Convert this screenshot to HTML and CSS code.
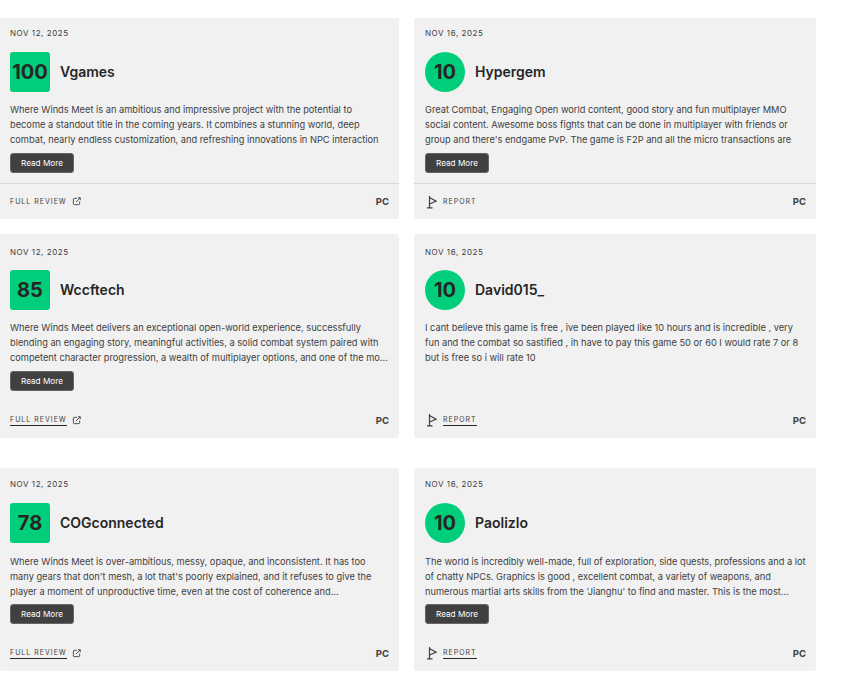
FILE: index.html
```html
<!DOCTYPE html>
<html lang="en">
<head>
    <meta charset="UTF-8">
    <title>Where Winds Meet reviews</title>
    <link rel="stylesheet" href="styles.css">
</head>
<body>
    <div class="row row-1">
        <div class="card card-left">
            <div class="date">NOV 12, 2025</div>
            <div class="head">
                <div class="score square">100</div>
                <div class="name">Vgames</div>
            </div>
            <p class="quote">Where Winds Meet is an ambitious and impressive project with the potential to become a standout title in the coming years. It combines a stunning world, deep combat, nearly endless customization, and refreshing innovations in NPC interaction</p>
            <a class="more">Read More</a>
            <div class="foot ruled">
                <span class="link"><span class="plain">FULL REVIEW</span>
                    <svg class="ext" viewBox="0 0 10 10"><path d="M5.5 1.5H2.5a1 1 0 0 0-1 1v5a1 1 0 0 0 1 1h5a1 1 0 0 0 1-1V5M4.5 5.5l4.5-4.5M6.5 .8H9.2V3.5" /></svg></span>
                <span class="plat">PC</span>
            </div>
        </div>
        <div class="card card-right">
            <div class="date">NOV 16, 2025</div>
            <div class="head">
                <div class="score circle">10</div>
                <div class="name">Hypergem</div>
            </div>
            <p class="quote">Great Combat, Engaging Open world content, good story and fun multiplayer MMO social content. Awesome boss fights that can be done in multiplayer with friends or group and there's endgame PvP. The game is F2P and all the micro transactions are</p>
            <a class="more">Read More</a>
            <div class="foot ruled">
                <span class="link"><svg class="flag" viewBox="0 0 12 14"><path d="M4.5 1v11.5M2 12.8h5.5M4.5 2.5L11 6.2 4.5 9" /></svg>
                    <span class="plain">REPORT</span></span>
                <span class="plat">PC</span>
            </div>
        </div>
    </div>

    <div class="row row-2">
        <div class="card card-left">
            <div class="date">NOV 12, 2025</div>
            <div class="head">
                <div class="score square">85</div>
                <div class="name">Wccftech</div>
            </div>
            <p class="quote">Where Winds Meet delivers an exceptional open-world experience, successfully blending an engaging story, meaningful activities, a solid combat system paired with competent character progression, a wealth of multiplayer options, and one of the mo...</p>
            <a class="more">Read More</a>
            <div class="foot">
                <span class="link"><span class="under">FULL REVIEW</span>
                    <svg class="ext" viewBox="0 0 10 10"><path d="M5.5 1.5H2.5a1 1 0 0 0-1 1v5a1 1 0 0 0 1 1h5a1 1 0 0 0 1-1V5M4.5 5.5l4.5-4.5M6.5 .8H9.2V3.5" /></svg></span>
                <span class="plat">PC</span>
            </div>
        </div>
        <div class="card card-right">
            <div class="date">NOV 16, 2025</div>
            <div class="head">
                <div class="score circle">10</div>
                <div class="name">David015_</div>
            </div>
            <p class="quote">I cant believe this game is free , ive been played like 10 hours and is incredible , very fun and the combat so sastified , ih have to pay this game 50 or 60 I would rate 7 or 8 but is free so i will rate 10</p>
            <a class="more hidden">Read More</a>
            <div class="foot">
                <span class="link"><svg class="flag" viewBox="0 0 12 14"><path d="M4.5 1v11.5M2 12.8h5.5M4.5 2.5L11 6.2 4.5 9" /></svg>
                    <span class="under">REPORT</span></span>
                <span class="plat">PC</span>
            </div>
        </div>
    </div>

    <div class="row row-3">
        <div class="card card-left">
            <div class="date">NOV 12, 2025</div>
            <div class="head">
                <div class="score square">78</div>
                <div class="name">COGconnected</div>
            </div>
            <p class="quote">Where Winds Meet is over-ambitious, messy, opaque, and inconsistent. It has too many gears that don't mesh, a lot that's poorly explained, and it refuses to give the player a moment of unproductive time, even at the cost of coherence and...</p>
            <a class="more">Read More</a>
            <div class="foot">
                <span class="link"><span class="under">FULL REVIEW</span>
                    <svg class="ext" viewBox="0 0 10 10"><path d="M5.5 1.5H2.5a1 1 0 0 0-1 1v5a1 1 0 0 0 1 1h5a1 1 0 0 0 1-1V5M4.5 5.5l4.5-4.5M6.5 .8H9.2V3.5" /></svg></span>
                <span class="plat">PC</span>
            </div>
        </div>
        <div class="card card-right">
            <div class="date">NOV 16, 2025</div>
            <div class="head">
                <div class="score circle">10</div>
                <div class="name">Paolizlo</div>
            </div>
            <p class="quote">The world is incredibly well-made, full of exploration, side quests, professions and a lot of chatty NPCs. Graphics is good , excellent combat, a variety of weapons, and numerous martial arts skills from the 'Jianghu' to find and master. This is the most...</p>
            <a class="more">Read More</a>
            <div class="foot">
                <span class="link"><svg class="flag" viewBox="0 0 12 14"><path d="M4.5 1v11.5M2 12.8h5.5M4.5 2.5L11 6.2 4.5 9" /></svg>
                    <span class="under">REPORT</span></span>
                <span class="plat">PC</span>
            </div>
        </div>
    </div>
</body>
</html>
```
FILE: styles.css
```css
* {
    padding: 0;
    margin: 0;
    box-sizing: border-box;
}

body {
    background: #fff;
    font-family: Inter, "Liberation Sans", sans-serif;
    color: #262626;
}

.row {
    display: flex;
    gap: 15px;
    width: 816px;
}

.row-1 {
    margin-top: 18px;
    height: 201px;
}

.row-2 {
    margin-top: 15px;
    height: 204px;
}

.row-3 {
    margin-top: 30px;
    height: 203px;
}

.card {
    background: #f1f1f1;
    display: flex;
    flex-direction: column;
    padding-top: 10px;
}

.row-2 .card,
.row-3 .card {
    border-radius: 3px;
}

.card-left {
    width: 399px;
    --pad: 10px;
}

.card-right {
    width: 402px;
    --pad: 11px;
}

.row-2 .card {
    padding-top: 13px;
}

.row-3 .card {
    padding-top: 11px;
}

.date {
    font-size: 8px;
    line-height: 11px;
    letter-spacing: .55px;
    color: #404040;
    margin-left: var(--pad);
}

.head {
    display: flex;
    align-items: center;
    gap: 10px;
    margin: 13px 0 0 var(--pad);
}

.row-2 .head {
    margin-top: 12px;
}

.score {
    width: 40px;
    height: 40px;
    background: #00ce7a;
    color: #262626;
    display: flex;
    align-items: center;
    justify-content: center;
    font-size: 20px;
    font-weight: 700;
}

.square {
    border-radius: 3px;
}

.circle {
    border-radius: 50%;
}

.name {
    font-size: 14px;
    font-weight: 600;
    margin-top: -2px;
}

.quote {
    font-size: 9.25px;
    line-height: 15px;
    color: #404040;
    margin: 10px 8px 0 var(--pad);
    height: 45px;
}

.row-1 .card-left .quote {
    margin-right: 14px;
}

.row-3 .quote {
    margin-top: 11px;
}

.more {
    display: block;
    width: 64px;
    height: 20px;
    margin: 6px 0 0 var(--pad);
    background: #404040;
    border: 1px solid #666;
    border-radius: 3px;
    color: #fff;
    font-size: 8.2px;
    line-height: 18px;
    text-align: center;
}

.row-3 .more {
    margin-top: 5px;
}

.hidden {
    visibility: hidden;
}

.foot {
    margin-top: auto;
    height: 36px;
    display: flex;
    align-items: center;
    justify-content: space-between;
    padding: 0 10px 0 var(--pad);
}

.ruled {
    border-top: 1px solid #d8d8d8;
}

.link {
    display: flex;
    align-items: center;
    gap: 5px;
    font-size: 7px;
    letter-spacing: 1px;
    color: #404040;
}

.under {
    border-bottom: 1px solid #262626;
    padding-bottom: 1px;
}

.ext {
    width: 9px;
    height: 9px;
    fill: none;
    stroke: #404040;
    stroke-width: 1;
}

.flag {
    width: 12px;
    height: 14px;
    margin-right: 1px;
    fill: none;
    stroke: #404040;
    stroke-width: 1.2;
}

.plat {
    font-size: 9.5px;
    font-weight: 700;
    color: #404040;
}
```
